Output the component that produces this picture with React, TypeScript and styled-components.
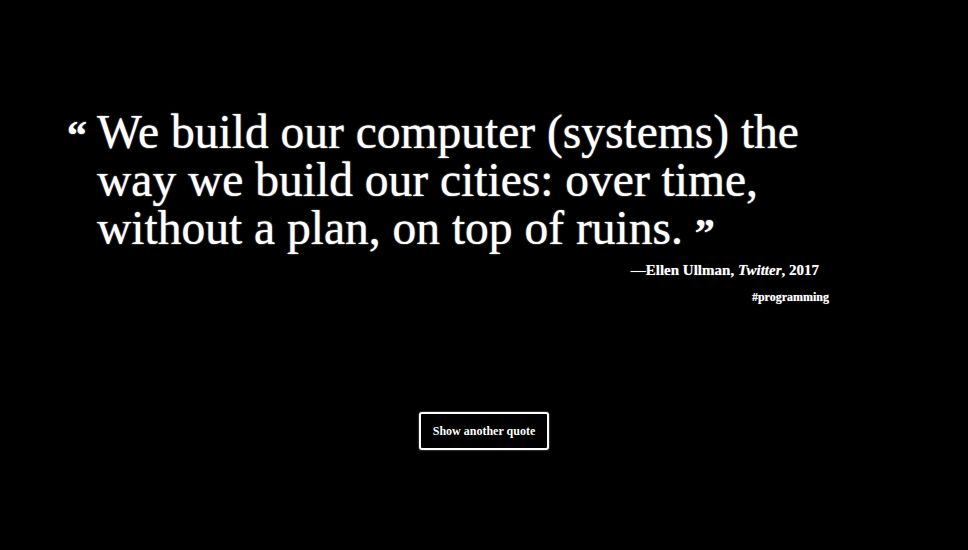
import React from 'react';
import styled, { createGlobalStyle } from 'styled-components';

const GlobalStyle = createGlobalStyle`
  html, body {
    margin: 0;
    padding: 0;
    background: #000;
  }
  body {
    font-family: 'Liberation Serif', 'Times New Roman', serif;
    color: #fff;
  }
`;

const Page = styled.main`
  width: 968px;
  height: 550px;
  background: #000;
  display: flex;
  flex-direction: column;
  align-items: center;
  box-sizing: border-box;
  padding-top: 108px;
`;

const QuoteBlock = styled.figure`
  margin: 0;
  width: 762px;
  display: flex;
  flex-direction: column;
  align-self: flex-start;
  margin-left: 67px;
`;

const QuoteRow = styled.blockquote`
  margin: 0;
  display: flex;
  align-items: flex-start;
`;

const Mark = styled.span<{ $close?: boolean }>`
  font-family: 'Liberation Serif', serif;
  font-weight: 700;
  font-size: 40px;
  line-height: ${(p) => (p.$close ? '0' : '1')};
  text-shadow: 0 0 1px #bbb, 0 0 2px #666;
  display: inline-block;
  vertical-align: ${(p) => (p.$close ? '-2px' : 'top')};
  margin-left: ${(p) => (p.$close ? '12px' : '0')};
  width: ${(p) => (p.$close ? 'auto' : '30px')};
  padding-top: ${(p) => (p.$close ? '0' : '8px')};
`;

const QuoteText = styled.p`
  margin: 0;
  font-size: 47.5px;
  line-height: 48px;
  font-weight: 400;
  color: #fff;
  text-shadow: 0 0 1px #bbb, 0 0 2px #666;
`;

const Caption = styled.figcaption`
  display: flex;
  flex-direction: column;
  align-items: flex-end;
  margin-top: 10px;
`;

const Attribution = styled.div`
  font-size: 15px;
  font-weight: 600;
  padding-right: 10px;
  text-shadow: 0 0 1px #888;

  em {
    font-style: italic;
  }
`;

const Tag = styled.div`
  margin-top: 11px;
  font-size: 12px;
  font-weight: 700;
  text-shadow: 0 0 1px #888;
`;

const Button = styled.button`
  margin-top: 107px;
  width: 130px;
  height: 38px;
  background: #000;
  color: #fff;
  border: 2px solid #fff;
  border-radius: 3px;
  box-shadow: 0 0 2px #999;
  font-family: 'Liberation Serif', 'Times New Roman', serif;
  font-size: 12px;
  font-weight: 700;
  cursor: pointer;
`;

export default function App() {
  return (
    <>
      <GlobalStyle />
      <Page>
        <QuoteBlock>
          <QuoteRow>
            <Mark>“</Mark>
            <QuoteText>
              We build our computer (systems) the
              <br />
              way we build our cities: over time,
              <br />
              without a plan, on top of ruins.
              <Mark $close>”</Mark>
            </QuoteText>
          </QuoteRow>
          <Caption>
            <Attribution>
              —Ellen Ullman, <em>Twitter</em>, 2017
            </Attribution>
            <Tag>#programming</Tag>
          </Caption>
        </QuoteBlock>
        <Button type="button">Show another quote</Button>
      </Page>
    </>
  );
}
